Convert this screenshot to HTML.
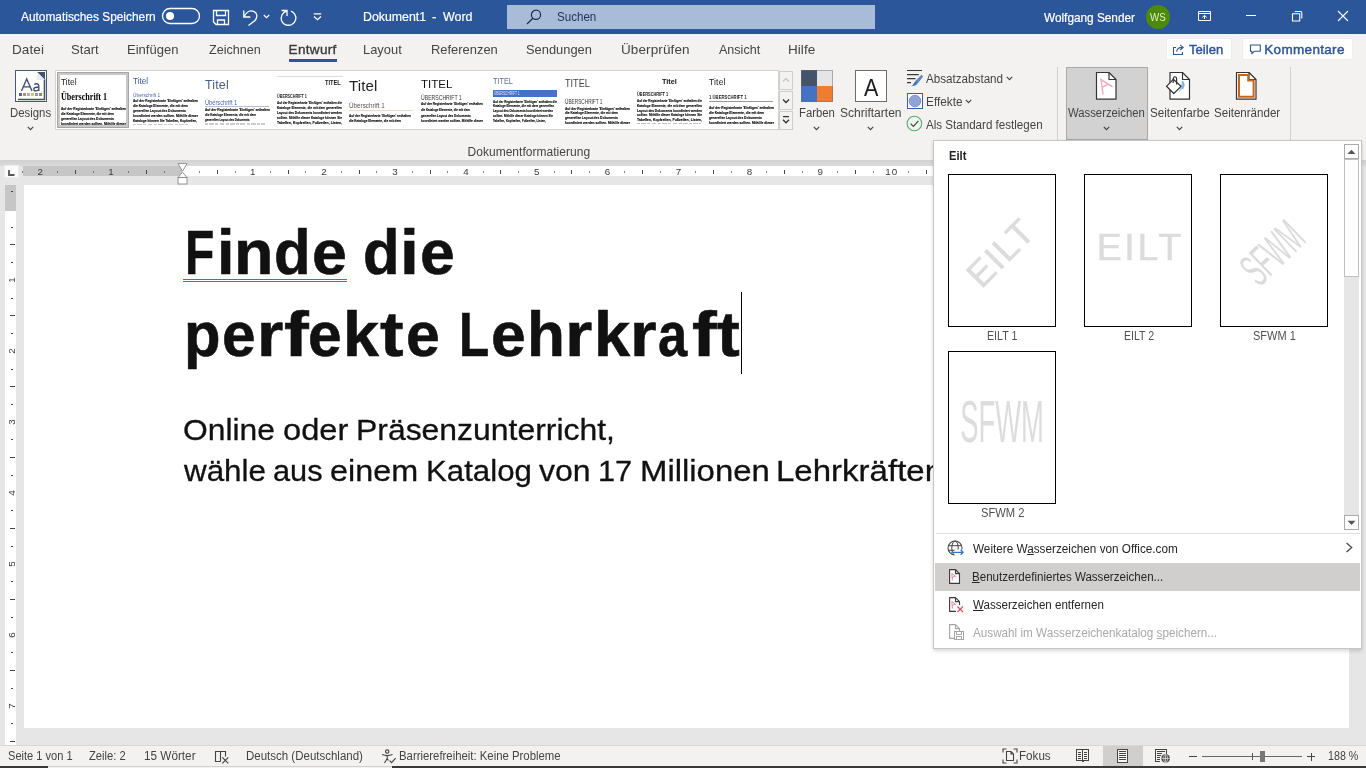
<!DOCTYPE html>
<html lang="de"><head><meta charset="utf-8"><title>Dokument1 - Word</title>
<style>
html,body{margin:0;padding:0;}
body{width:1366px;height:768px;overflow:hidden;background:#e6e6e6;position:relative;font-family:"Liberation Sans",sans-serif;}
#root{position:absolute;left:0;top:0;width:1366px;height:768px;overflow:hidden;will-change:transform;}
.b{position:absolute;box-sizing:border-box;display:block;}
.t{position:absolute;white-space:nowrap;line-height:1;transform-origin:0 0;font-family:"Liberation Sans",sans-serif;}
u{text-decoration:underline;text-underline-offset:1px;}
</style></head><body><div id="root">
<div class="b" style="left:0px;top:0px;width:1366px;height:34px;background:#2b579a;"></div>
<div class="b" style="left:0px;top:34px;width:1366px;height:126px;background:#f3f2f1;"></div>
<div class="b" style="left:0px;top:160px;width:1366px;height:6px;background:linear-gradient(#d0d0d0,#dbdbdb);"></div>
<div class="b" style="left:24px;top:185px;width:1325px;height:543px;background:#ffffff;"></div>
<span class="t" style="left:21.00px;top:10.00px;font-size:13px;color:#ffffff;transform:scaleX(0.9139);-webkit-text-stroke:0.2px #fff;">Automatisches Speichern</span>
<svg class="b" style="left:161px;top:7px;" width="40" height="18" viewBox="0 0 40 18"><rect x="1.5" y="1.5" width="37" height="15" rx="7.5" fill="none" stroke="#fff" stroke-width="1.3"/><circle cx="9" cy="9" r="4" fill="#fff"/></svg>
<svg class="b" style="left:212px;top:9px;" width="18" height="17" viewBox="0 0 18 17"><path d="M1.5 1.5H16.5V15.5H4L1.5 13Z M4.5 1.5V6.5H13.5V1.5 M5.5 15.5V11H12.5V15.5" fill="none" stroke="#fff" stroke-width="1.3"/></svg>
<svg class="b" style="left:242px;top:9px;" width="17" height="18" viewBox="0 0 17 18"><path d="M1.8 1.5V8H8.3 M2 8C4 3 8 1.2 11.5 2.3C15.5 3.8 15.8 8.3 13 11.5L6.5 16.5" fill="none" stroke="#fff" stroke-width="1.3"/></svg>
<svg class="b" style="left:263px;top:14px;" width="7" height="5" viewBox="0 0 7 5"><path d="M0.8 1L3.5 3.6L6.2 1" fill="none" stroke="#fff" stroke-width="1.2"/></svg>
<svg class="b" style="left:279px;top:9px;" width="19" height="18" viewBox="0 0 19 18"><path d="M2.5 1.5H8V7 M7.8 1.8C3 3.5 1.5 8 2.5 11.5C4 15.8 9 17.3 12.8 15.5C17 13.3 18 8.3 15.5 4.8C14.5 3.4 13.3 2.6 12 2.1" fill="none" stroke="#fff" stroke-width="1.3"/></svg>
<svg class="b" style="left:313px;top:12px;" width="9" height="9" viewBox="0 0 9 9"><path d="M0.8 1.8H8.2 M1 4.5L4.5 7.6L8 4.5" fill="none" stroke="#fff" stroke-width="1.2"/></svg>
<span class="t" style="left:363.05px;top:10.00px;font-size:13px;color:#ffffff;transform:scaleX(0.9480);-webkit-text-stroke:0.2px #fff;">Dokument1</span>
<span class="t" style="left:431.88px;top:10.00px;font-size:13px;color:#ffffff;-webkit-text-stroke:0.2px #fff;">-</span>
<span class="t" style="left:443.30px;top:10.00px;font-size:13px;color:#ffffff;transform:scaleX(0.9567);-webkit-text-stroke:0.2px #fff;">Word</span>
<div class="b" style="left:507px;top:5px;width:368px;height:24px;background:#a8bbd9;"></div>
<svg class="b" style="left:526px;top:9px;" width="16" height="16" viewBox="0 0 16 16"><circle cx="10" cy="5.8" r="4.6" fill="none" stroke="#1e2f4d" stroke-width="1.2"/><path d="M6.8 9.2L1 15" stroke="#1e2f4d" stroke-width="1.3"/></svg>
<span class="t" style="left:557.44px;top:10.00px;font-size:13px;color:#1f3157;transform:scaleX(0.8915);">Suchen</span>
<span class="t" style="left:1044.00px;top:11.00px;font-size:13px;color:#ffffff;transform:scaleX(0.9080);-webkit-text-stroke:0.2px #fff;">Wolfgang Sender</span>
<div class="b" style="left:1146px;top:5px;width:24px;height:24px;border-radius:50%;background:#4c8a0b"></div>
<span class="t" style="left:1150.00px;top:12.00px;font-size:10.5px;color:#e2efc0;transform:scaleX(0.9282);">WS</span>
<svg class="b" style="left:1197px;top:10px;" width="15" height="12" viewBox="0 0 15 12"><path d="M1.5 1.5H13.5V10.5H1.5Z M1.5 3.5H13.5 M7.5 9V5.5 M5.3 7.4L7.5 5.4L9.7 7.4" fill="none" stroke="#fff" stroke-width="1"/></svg>
<div class="b" style="left:1246px;top:15px;width:10px;height:1px;background:#fff;"></div>
<svg class="b" style="left:1291px;top:10px;" width="12" height="12" viewBox="0 0 12 12"><path d="M1.5 3.8H8.7V11H1.5Z" fill="none" stroke="#fff" stroke-width="1.1" stroke-linejoin="round"/><path d="M3.8 1.5H9.5Q10.8 1.5 10.8 2.8V8.6" fill="none" stroke="#fff" stroke-width="1.1"/></svg>
<svg class="b" style="left:1337px;top:10px;" width="12" height="12" viewBox="0 0 12 12"><path d="M1 1L11 11M11 1L1 11" stroke="#fff" stroke-width="1.1"/></svg>
<span class="t" style="left:11.88px;top:43.00px;font-size:13.5px;color:#444444;letter-spacing:0.125px;">Datei</span>
<span class="t" style="left:71.39px;top:43.00px;font-size:13.5px;color:#444444;transform:scaleX(0.9730);">Start</span>
<span class="t" style="left:126.91px;top:43.00px;font-size:13.5px;color:#444444;transform:scaleX(0.9659);">Einfügen</span>
<span class="t" style="left:208.65px;top:43.00px;font-size:13.5px;color:#444444;transform:scaleX(0.9327);">Zeichnen</span>
<span class="t" style="left:363.43px;top:43.00px;font-size:13.5px;color:#444444;transform:scaleX(0.9554);">Layout</span>
<span class="t" style="left:430.92px;top:43.00px;font-size:13.5px;color:#444444;transform:scaleX(0.9565);">Referenzen</span>
<span class="t" style="left:526.40px;top:43.00px;font-size:13.5px;color:#444444;transform:scaleX(0.9541);">Sendungen</span>
<span class="t" style="left:621.00px;top:43.00px;font-size:13.5px;color:#444444;letter-spacing:0.119px;">Überprüfen</span>
<span class="t" style="left:719.00px;top:43.00px;font-size:13.5px;color:#444444;transform:scaleX(0.9292);">Ansicht</span>
<span class="t" style="left:787.88px;top:43.00px;font-size:13.5px;color:#444444;letter-spacing:0.088px;">Hilfe</span>
<span class="t" style="left:288.57px;top:43.00px;font-size:13.5px;color:#3b3b3b;letter-spacing:0.329px;-webkit-text-stroke:0.35px #3b3b3b;">Entwurf</span>
<div class="b" style="left:289px;top:59px;width:48px;height:3px;background:#2b579a;"></div>
<div class="b" style="left:1166px;top:38px;width:66px;height:22px;background:#ffffff;border-radius:2px;border:1px solid #f0eeec;"></div>
<div class="b" style="left:1242px;top:38px;width:111px;height:22px;background:#ffffff;border-radius:2px;border:1px solid #f0eeec;"></div>
<svg class="b" style="left:1172px;top:43px;" width="13" height="13" viewBox="0 0 13 13"><path d="M4 4.5H1.5V11.5H10.5V9 M4.6 8.6C5 5.8 7 4.4 10 4.4 M8.2 1.8L11.2 4.4L8.2 7" fill="none" stroke="#2f5597" stroke-width="1.1"/></svg>
<span class="t" style="left:1189.26px;top:43.00px;font-size:13.5px;color:#2f5597;transform:scaleX(0.9700);-webkit-text-stroke:0.45px #2f5597;">Teilen</span>
<svg class="b" style="left:1249px;top:43px;" width="13" height="12" viewBox="0 0 13 12"><path d="M1.5 2H11.3V8.3H5.3L2.9 10.6V8.3H1.5Z" fill="none" stroke="#2f5597" stroke-width="1.1" stroke-linejoin="round"/></svg>
<span class="t" style="left:1264.28px;top:43.00px;font-size:13.5px;color:#2f5597;letter-spacing:0.322px;-webkit-text-stroke:0.45px #2f5597;">Kommentare</span>
<svg class="b" style="left:15px;top:70px;" width="32" height="32" viewBox="0 0 32 32"><rect x="0.5" y="0.5" width="31" height="31" fill="#fff" stroke="#4a5a73"/>
<rect x="2" y="2" width="28" height="28" fill="#fdfdfd"/>
<path d="M29.5 9V29.5H3" fill="none" stroke="#44546a" stroke-width="1.6"/>
<path d="M22 2H30V10Z" fill="#44546a"/><path d="M22 2V10H30Z" fill="#e8ecf2"/>
<g fill="none" stroke="#3e4d70" stroke-width="1.35"><path d="M6.5 21L11.7 9L17 21 M8.3 16.8H15.2"/><path d="M19.3 14.6C20.5 13.3 23.8 13.2 23.8 16V21 M23.8 17C21 17 18.8 17.4 18.8 19.2C18.8 21.4 22.5 21.4 23.8 19.4"/></g>
<rect x="4" y="23" width="3" height="3" fill="#5a5fa8"/><rect x="8" y="23" width="3" height="3" fill="#a8985c"/><rect x="12" y="23" width="3" height="3" fill="#c2a2b3"/><rect x="16" y="23" width="3" height="3" fill="#c9d163"/><rect x="20" y="23" width="3" height="3" fill="#8d92cb"/><rect x="24" y="23" width="3" height="3" fill="#7b9b52"/></svg>
<span class="t" style="left:10.09px;top:107.00px;font-size:12.5px;color:#444444;transform:scaleX(0.9100);">Designs</span>
<svg class="b" style="left:27.2px;top:126.3px;" width="7" height="5" viewBox="0 0 7 5"><path d="M0.8 0.9L3.5 3.6L6.2 0.9" fill="none" stroke="#444" stroke-width="1.2"/></svg>
<div class="b" style="left:55px;top:70px;width:724px;height:60px;background:#ffffff;border:1px solid #d4d2d0;"></div>
<div class="b" style="left:57px;top:72px;width:72px;height:56px;background:#ffffff;border:3px solid #c8c8c8;outline:1px solid #a6a6a6;outline-offset:-1px;"></div>
<span class="t" style="left:60.88px;top:78.00px;font-size:8.5px;color:#1a1a1a;transform:scaleX(0.9917);">Titel</span>
<span class="t" style="left:60.81px;top:92.00px;font-size:10.5px;color:#000;transform:scaleX(0.7712);font-weight:bold;font-family:'Liberation Serif',serif;">Überschrift 1</span>
<span class="t" style="left:60.91px;top:107.00px;font-size:4.3px;color:#000;transform:scaleX(0.7585);font-weight:bold;-webkit-text-stroke:0.12px #000;">Auf der Registerkarte &#x27;Einfügen&#x27; enthalten</span>
<span class="t" style="left:60.91px;top:112.00px;font-size:4.3px;color:#000;transform:scaleX(0.7337);font-weight:bold;-webkit-text-stroke:0.12px #000;">die Kataloge Elemente, die mit dem</span>
<span class="t" style="left:60.91px;top:117.00px;font-size:4.3px;color:#000;transform:scaleX(0.7536);font-weight:bold;-webkit-text-stroke:0.12px #000;">generellen Layout des Dokuments</span>
<span class="t" style="left:60.81px;top:122.00px;font-size:4.3px;color:#000;transform:scaleX(0.7642);font-weight:bold;-webkit-text-stroke:0.12px #000;">koordiniert werden sollten. Mithilfe dieser</span>
<span class="t" style="left:132.88px;top:77.00px;font-size:8.5px;color:#3d5a94;transform:scaleX(0.9587);">Titel</span>
<span class="t" style="left:132.60px;top:92.00px;font-size:6px;color:#4a6aa8;transform:scaleX(0.8000);">Überschrift 1</span>
<span class="t" style="left:132.91px;top:99.00px;font-size:4.3px;color:#000;transform:scaleX(0.7585);font-weight:bold;-webkit-text-stroke:0.12px #000;">Auf der Registerkarte &#x27;Einfügen&#x27; enthalten</span>
<span class="t" style="left:132.90px;top:104.00px;font-size:4.3px;color:#000;transform:scaleX(0.7619);font-weight:bold;-webkit-text-stroke:0.12px #000;">die Kataloge Elemente, die mit dem</span>
<span class="t" style="left:132.91px;top:109.00px;font-size:4.3px;color:#000;transform:scaleX(0.7536);font-weight:bold;-webkit-text-stroke:0.12px #000;">generellen Layout des Dokuments</span>
<span class="t" style="left:132.81px;top:114.00px;font-size:4.3px;color:#000;transform:scaleX(0.7642);font-weight:bold;-webkit-text-stroke:0.12px #000;">koordiniert werden sollten. Mithilfe dieser</span>
<span class="t" style="left:132.81px;top:119.00px;font-size:4.3px;color:#000;transform:scaleX(0.7467);font-weight:bold;-webkit-text-stroke:0.12px #000;">Kataloge können Sie Tabellen, Kopfzeilen,</span>
<div class="b" style="left:133px;top:123.7px;width:55px;height:1.2px;opacity:0.5;background:repeating-linear-gradient(90deg,#999 0 3px,transparent 3px 4.3px,#999 4.3px 9px,transparent 9px 10.4px)"></div>
<span class="t" style="left:204.95px;top:79.00px;font-size:12.5px;color:#4a5f86;letter-spacing:0.169px;">Titel</span>
<span class="t" style="left:204.56px;top:100.00px;font-size:6.5px;color:#4a6aa8;transform:scaleX(0.8750);">Überschrift 1</span>
<div class="b" style="left:205px;top:106.3px;width:64px;height:0.6px;background:#b4c0d8;"></div>
<span class="t" style="left:204.91px;top:108.00px;font-size:4.3px;color:#000;transform:scaleX(0.7585);font-weight:bold;-webkit-text-stroke:0.12px #000;">Auf der Registerkarte &#x27;Einfügen&#x27; enthalten</span>
<span class="t" style="left:204.91px;top:113.00px;font-size:4.3px;color:#000;transform:scaleX(0.7055);font-weight:bold;-webkit-text-stroke:0.12px #000;">die Kataloge Elemente, die mit dem</span>
<span class="t" style="left:204.92px;top:118.00px;font-size:4.3px;color:#000;transform:scaleX(0.6377);font-weight:bold;-webkit-text-stroke:0.12px #000;">generellen Layout des Dokuments</span>
<div class="b" style="left:205px;top:123.4px;width:60px;height:1.2px;opacity:0.5;background:repeating-linear-gradient(90deg,#999 0 3px,transparent 3px 4.3px,#999 4.3px 9px,transparent 9px 10.4px)"></div>
<div class="b" style="left:277px;top:76.3px;width:66px;height:0.6px;background:#dcdcdc;"></div>
<span class="t" style="left:325.30px;top:79.00px;font-size:7.5px;color:#1a1a1a;transform:scaleX(0.7610);font-weight:bold;">TITEL</span>
<span class="t" style="left:276.77px;top:93.00px;font-size:6px;color:#1a1a1a;transform:scaleX(0.6227);font-weight:bold;">ÜBERSCHRIFT 1</span>
<span class="t" style="left:276.91px;top:101.00px;font-size:4.3px;color:#000;transform:scaleX(0.6975);font-weight:bold;-webkit-text-stroke:0.12px #000;">Auf der Registerkarte &#x27;Einfügen&#x27; enthalten die</span>
<span class="t" style="left:276.81px;top:106.00px;font-size:4.3px;color:#000;transform:scaleX(0.7442);font-weight:bold;-webkit-text-stroke:0.12px #000;">Kataloge Elemente, die mit dem generellen</span>
<span class="t" style="left:276.81px;top:111.00px;font-size:4.3px;color:#000;transform:scaleX(0.7464);font-weight:bold;-webkit-text-stroke:0.12px #000;">Layout des Dokuments koordiniert werden</span>
<span class="t" style="left:276.91px;top:116.00px;font-size:4.3px;color:#000;transform:scaleX(0.7325);font-weight:bold;-webkit-text-stroke:0.12px #000;">sollten. Mithilfe dieser Kataloge können Sie</span>
<span class="t" style="left:277.00px;top:121.00px;font-size:4.3px;color:#000;transform:scaleX(0.8153);font-weight:bold;-webkit-text-stroke:0.12px #000;">Tabellen, Kopfzeilen, Fußzeilen, Listen,</span>
<span class="t" style="left:348.93px;top:78.00px;font-size:15px;color:#222;letter-spacing:0.175px;">Titel</span>
<span class="t" style="left:348.55px;top:102.00px;font-size:7px;color:#555;transform:scaleX(0.9003);">Überschrift 1</span>
<div class="b" style="left:349px;top:110.3px;width:64px;height:0.6px;background:#f0dcc6;"></div>
<span class="t" style="left:348.91px;top:114.00px;font-size:4.3px;color:#000;transform:scaleX(0.7230);font-weight:bold;-webkit-text-stroke:0.12px #000;">Auf der Registerkarte &#x27;Einfügen&#x27; enthalten</span>
<span class="t" style="left:348.91px;top:119.00px;font-size:4.3px;color:#000;transform:scaleX(0.7196);font-weight:bold;-webkit-text-stroke:0.12px #000;">die Kataloge Elemente, die mit dem</span>
<span class="t" style="left:420.76px;top:79.00px;font-size:11.8px;color:#111;transform:scaleX(0.9785);">TITEL</span>
<span class="t" style="left:420.60px;top:95.00px;font-size:6.5px;color:#333;transform:scaleX(0.7901);">ÜBERSCHRIFT 1</span>
<span class="t" style="left:420.91px;top:102.00px;font-size:4.3px;color:#000;transform:scaleX(0.7230);font-weight:bold;-webkit-text-stroke:0.12px #000;">Auf der Registerkarte &#x27;Einfügen&#x27; enthalten</span>
<span class="t" style="left:420.92px;top:108.00px;font-size:4.3px;color:#000;transform:scaleX(0.6772);font-weight:bold;-webkit-text-stroke:0.12px #000;">die Kataloge Elemente, die mit dem</span>
<span class="t" style="left:420.91px;top:114.00px;font-size:4.3px;color:#000;transform:scaleX(0.7101);font-weight:bold;-webkit-text-stroke:0.12px #000;">generellen Layout des Dokuments</span>
<span class="t" style="left:420.82px;top:119.00px;font-size:4.3px;color:#000;transform:scaleX(0.7284);font-weight:bold;-webkit-text-stroke:0.12px #000;">koordiniert werden sollten. Mithilfe dieser</span>
<span class="t" style="left:492.89px;top:77.00px;font-size:8.5px;color:#5a6c9a;transform:scaleX(0.8571);">TITEL</span>
<div class="b" style="left:493px;top:90px;width:64px;height:6.7px;background:#4472c4;"></div>
<span class="t" style="left:493.73px;top:92.00px;font-size:4.5px;color:#dfe6f5;transform:scaleX(0.7143);">ÜBERSCHRIFT 1</span>
<span class="t" style="left:492.91px;top:100.00px;font-size:4.3px;color:#000;transform:scaleX(0.6866);font-weight:bold;-webkit-text-stroke:0.12px #000;">Auf der Registerkarte &#x27;Einfügen&#x27; enthalten die</span>
<span class="t" style="left:492.83px;top:104.00px;font-size:4.3px;color:#000;transform:scaleX(0.6977);font-weight:bold;-webkit-text-stroke:0.12px #000;">Kataloge Elemente, die mit dem generellen</span>
<span class="t" style="left:492.83px;top:109.00px;font-size:4.3px;color:#000;transform:scaleX(0.6880);font-weight:bold;-webkit-text-stroke:0.12px #000;">Layout des Dokuments koordiniert werden</span>
<span class="t" style="left:492.92px;top:114.00px;font-size:4.3px;color:#000;transform:scaleX(0.6753);font-weight:bold;-webkit-text-stroke:0.12px #000;">sollten. Mithilfe dieser Kataloge können Sie</span>
<span class="t" style="left:493.00px;top:119.00px;font-size:4.3px;color:#000;transform:scaleX(0.6624);font-weight:bold;-webkit-text-stroke:0.12px #000;">Tabellen, Kopfzeilen, Fußzeilen, Listen,</span>
<span class="t" style="left:564.98px;top:78.00px;font-size:10.5px;color:#444;transform:scaleX(0.8679);">TITEL</span>
<span class="t" style="left:564.66px;top:98.00px;font-size:7px;color:#333;transform:scaleX(0.6758);">ÜBERSCHRIFT 1</span>
<span class="t" style="left:564.91px;top:107.00px;font-size:4.3px;color:#000;transform:scaleX(0.7585);font-weight:bold;-webkit-text-stroke:0.12px #000;">Auf der Registerkarte &#x27;Einfügen&#x27; enthalten</span>
<span class="t" style="left:564.91px;top:111.00px;font-size:4.3px;color:#000;transform:scaleX(0.7337);font-weight:bold;-webkit-text-stroke:0.12px #000;">die Kataloge Elemente, die mit dem</span>
<span class="t" style="left:564.91px;top:116.00px;font-size:4.3px;color:#000;transform:scaleX(0.7536);font-weight:bold;-webkit-text-stroke:0.12px #000;">generellen Layout des Dokuments</span>
<span class="t" style="left:564.81px;top:121.00px;font-size:4.3px;color:#000;transform:scaleX(0.7642);font-weight:bold;-webkit-text-stroke:0.12px #000;">koordiniert werden sollten. Mithilfe dieser</span>
<span class="t" style="left:662.09px;top:78.00px;font-size:8px;color:#111;transform:scaleX(0.9088);font-weight:bold;">Titel</span>
<span class="t" style="left:636.75px;top:92.00px;font-size:5.8px;color:#111;transform:scaleX(0.6722);font-weight:bold;">ÜBERSCHRIFT 1</span>
<span class="t" style="left:636.91px;top:99.00px;font-size:4.3px;color:#000;transform:scaleX(0.6975);font-weight:bold;-webkit-text-stroke:0.12px #000;">Auf der Registerkarte &#x27;Einfügen&#x27; enthalten die</span>
<span class="t" style="left:636.81px;top:104.00px;font-size:4.3px;color:#000;transform:scaleX(0.7442);font-weight:bold;-webkit-text-stroke:0.12px #000;">Kataloge Elemente, die mit dem generellen</span>
<span class="t" style="left:636.81px;top:109.00px;font-size:4.3px;color:#000;transform:scaleX(0.7464);font-weight:bold;-webkit-text-stroke:0.12px #000;">Layout des Dokuments koordiniert werden</span>
<span class="t" style="left:636.91px;top:113.00px;font-size:4.3px;color:#000;transform:scaleX(0.7325);font-weight:bold;-webkit-text-stroke:0.12px #000;">sollten. Mithilfe dieser Kataloge können Sie</span>
<span class="t" style="left:637.00px;top:118.00px;font-size:4.3px;color:#000;transform:scaleX(0.8153);font-weight:bold;-webkit-text-stroke:0.12px #000;">Tabellen, Kopfzeilen, Fußzeilen, Listen,</span>
<div class="b" style="left:637px;top:123.2px;width:64px;height:1.2px;opacity:0.5;background:repeating-linear-gradient(90deg,#888 0 3px,transparent 3px 4.3px,#888 4.3px 9px,transparent 9px 10.4px)"></div>
<span class="t" style="left:708.88px;top:78.00px;font-size:8.5px;color:#222;letter-spacing:0.219px;">Titel</span>
<span class="t" style="left:708.73px;top:94.00px;font-size:6px;color:#222;transform:scaleX(0.7085);font-weight:bold;">1   ÜBERSCHRIFT 1</span>
<div class="b" style="left:709px;top:101.2px;width:64px;height:0.7px;background:#999;"></div>
<span class="t" style="left:708.91px;top:106.00px;font-size:4.3px;color:#000;transform:scaleX(0.7585);font-weight:bold;-webkit-text-stroke:0.12px #000;">Auf der Registerkarte &#x27;Einfügen&#x27; enthalten</span>
<span class="t" style="left:708.90px;top:111.00px;font-size:4.3px;color:#000;transform:scaleX(0.7619);font-weight:bold;-webkit-text-stroke:0.12px #000;">die Kataloge Elemente, die mit dem</span>
<span class="t" style="left:708.91px;top:116.00px;font-size:4.3px;color:#000;transform:scaleX(0.7536);font-weight:bold;-webkit-text-stroke:0.12px #000;">generellen Layout des Dokuments</span>
<span class="t" style="left:708.81px;top:121.00px;font-size:4.3px;color:#000;transform:scaleX(0.7642);font-weight:bold;-webkit-text-stroke:0.12px #000;">koordiniert werden sollten. Mithilfe dieser</span>
<div class="b" style="left:779px;top:71px;width:14px;height:19px;background:#f3f2f1;border:1px solid #cfcdcb;"></div>
<div class="b" style="left:779px;top:91px;width:14px;height:18.5px;background:#f3f2f1;border:1px solid #cfcdcb;"></div>
<div class="b" style="left:779px;top:110.5px;width:14px;height:19px;background:#f3f2f1;border:1px solid #cfcdcb;"></div>
<svg class="b" style="left:782px;top:77px;" width="8" height="6" viewBox="0 0 8 6"><path d="M1 4.5L4 1.5L7 4.5" fill="none" stroke="#c4c2c0" stroke-width="1.2"/></svg>
<svg class="b" style="left:782px;top:98px;" width="8" height="6" viewBox="0 0 8 6"><path d="M1 1.5L4 4.5L7 1.5" fill="none" stroke="#333" stroke-width="1.3"/></svg>
<svg class="b" style="left:782px;top:115px;" width="8" height="10" viewBox="0 0 8 10"><path d="M1 1.6H7 M1 4.8L4 7.8L7 4.8" fill="none" stroke="#333" stroke-width="1.3"/></svg>
<span class="t" style="left:467.50px;top:146.00px;font-size:12px;color:#444444;letter-spacing:0.029px;">Dokumentformatierung</span>
<svg class="b" style="left:801px;top:70px;" width="32" height="32" viewBox="0 0 32 32"><rect x="0" y="0" width="16" height="16" fill="#44546a"/><rect x="16" y="0" width="16" height="16" fill="#e4e5e6"/><rect x="0" y="16" width="16" height="16" fill="#4472c4"/><rect x="16" y="16" width="16" height="16" fill="#ed7d31"/><rect x="0.5" y="0.5" width="31" height="31" fill="none" stroke="#6a6f78" stroke-opacity="0.5"/></svg>
<span class="t" style="left:798.89px;top:107.00px;font-size:12.5px;color:#444444;transform:scaleX(0.9060);">Farben</span>
<svg class="b" style="left:813.1px;top:126.3px;" width="7" height="5" viewBox="0 0 7 5"><path d="M0.8 0.9L3.5 3.6L6.2 0.9" fill="none" stroke="#444" stroke-width="1.2"/></svg>
<div class="b" style="left:855px;top:70px;width:32px;height:32px;background:#ffffff;border:1px solid #6e6e6e;"></div>
<span class="t" style="left:863.60px;top:76.00px;font-size:24.5px;color:#1a1a1a;transform:scaleX(0.8800);">A</span>
<span class="t" style="left:839.60px;top:107.00px;font-size:12.5px;color:#444444;transform:scaleX(0.9632);">Schriftarten</span>
<svg class="b" style="left:866.9px;top:126.3px;" width="7" height="5" viewBox="0 0 7 5"><path d="M0.8 0.9L3.5 3.6L6.2 0.9" fill="none" stroke="#444" stroke-width="1.2"/></svg>
<svg class="b" style="left:906px;top:69px;" width="17" height="18" viewBox="0 0 17 18"><path d="M1 1.5H16 M1 5.6H12.8 M1 9.6H9.5 M1 13.6H5" stroke="#3a3a3a" stroke-width="1.1"/><path d="M15.4 6.2L16.8 7.4L11.8 13.8L9.6 12.2Z" fill="#5b8fd0" stroke="#3d5f9a" stroke-width="0.6"/><path d="M9.6 12.2L11.8 13.8C11 16 8.6 17.4 5.6 17C7.6 16 7.6 13.6 9.6 12.2Z" fill="#3f74c4"/></svg>
<span class="t" style="left:926.30px;top:73.00px;font-size:12.5px;color:#444444;transform:scaleX(0.9319);">Absatzabstand</span>
<svg class="b" style="left:1006.0px;top:76.3px;" width="7" height="5" viewBox="0 0 7 5"><path d="M0.8 0.9L3.5 3.6L6.2 0.9" fill="none" stroke="#444" stroke-width="1.2"/></svg>
<svg class="b" style="left:907px;top:93px;" width="16" height="16" viewBox="0 0 16 16"><rect x="0.5" y="0.5" width="15" height="15" fill="#fff" stroke="#3b5ea5"/><circle cx="8" cy="8" r="5.8" fill="#8fa3d6" stroke="#6f86c4" stroke-width="0.8"/></svg>
<span class="t" style="left:926.25px;top:96.00px;font-size:12.5px;color:#444444;transform:scaleX(0.9455);">Effekte</span>
<svg class="b" style="left:965.3px;top:99.3px;" width="7" height="5" viewBox="0 0 7 5"><path d="M0.8 0.9L3.5 3.6L6.2 0.9" fill="none" stroke="#444" stroke-width="1.2"/></svg>
<svg class="b" style="left:906px;top:115px;" width="17" height="17" viewBox="0 0 17 17"><circle cx="8.4" cy="8.5" r="7.3" fill="#eaf6ee" stroke="#5fa878" stroke-width="1.1"/><path d="M4.6 8.6L7.4 11.4L12.4 5.8" fill="none" stroke="#444" stroke-width="1.2"/></svg>
<span class="t" style="left:926.30px;top:119.00px;font-size:12.5px;color:#444444;transform:scaleX(0.9272);">Als Standard festlegen</span>
<div class="b" style="left:1057px;top:67px;width:1px;height:73px;background:#d2d0ce;"></div>
<div class="b" style="left:1290px;top:67px;width:1px;height:73px;background:#d2d0ce;"></div>
<div class="b" style="left:1066px;top:67px;width:82px;height:73px;background:#d2d2d2;border:1px solid #a8a8a8;"></div>
<svg class="b" style="left:1095px;top:71px;" width="23" height="30" viewBox="0 0 23 30"><path d="M1.5 1.5H14L21 8.5V28.2H1.5Z" fill="#fff" stroke="#333" stroke-width="1.2" stroke-linejoin="round"/><path d="M14 1.5V8.5H21" fill="none" stroke="#333" stroke-width="1.2" stroke-linejoin="round"/><g fill="none" stroke="#eeb0be" stroke-width="1.5" stroke-linecap="round"><path d="M8 23L6 8.5L17 15.5 M7 16.2L13.2 13.2"/></g></svg>
<span class="t" style="left:1068.40px;top:107.00px;font-size:12.5px;color:#444444;transform:scaleX(0.9046);">Wasserzeichen</span>
<svg class="b" style="left:1103.0px;top:126.3px;" width="7" height="5" viewBox="0 0 7 5"><path d="M0.8 0.9L3.5 3.6L6.2 0.9" fill="none" stroke="#444" stroke-width="1.2"/></svg>
<svg class="b" style="left:1165px;top:71px;" width="27" height="30" viewBox="0 0 27 30"><g transform="translate(3.5 0)"><path d="M1.5 1.5H14L21 8.5V28.2H1.5Z" fill="#fff" stroke="#333" stroke-width="1.2" stroke-linejoin="round"/><path d="M14 1.5V8.5H21" fill="none" stroke="#333" stroke-width="1.2" stroke-linejoin="round"/></g><path d="M13.5 22L17.2 10.5L20 14.5Z" fill="#9cc3e6" opacity="0.9"/><path d="M17 10.5C18.8 11.5 19.2 14 17.5 18" fill="none" stroke="#7fb0dd" stroke-width="1.6"/><path d="M8.3 8.3L1.5 15.3L8.8 22.5L16 15.3Z" fill="#fff" stroke="#333" stroke-width="1.2" stroke-linejoin="round"/><path d="M8.2 12V8C8.2 5 11.6 5 11.6 8V13.5" fill="none" stroke="#333" stroke-width="1.2"/></svg>
<span class="t" style="left:1149.82px;top:107.00px;font-size:12.5px;color:#444444;transform:scaleX(0.9339);">Seitenfarbe</span>
<svg class="b" style="left:1175.9px;top:126.3px;" width="7" height="5" viewBox="0 0 7 5"><path d="M0.8 0.9L3.5 3.6L6.2 0.9" fill="none" stroke="#444" stroke-width="1.2"/></svg>
<svg class="b" style="left:1235px;top:71px;" width="23" height="30" viewBox="0 0 23 30"><path d="M1.5 1.5H14L21 8.5V28.2H1.5Z" fill="#fff" stroke="#333" stroke-width="1.2" stroke-linejoin="round"/><path d="M14 1.5V8.5H21" fill="none" stroke="#333" stroke-width="1.2" stroke-linejoin="round"/><path d="M4 4H13.2V9.5H18.6V25.8H4Z" fill="none" stroke="#c8651b" stroke-width="2"/></svg>
<span class="t" style="left:1213.82px;top:107.00px;font-size:12.5px;color:#444444;transform:scaleX(0.9244);">Seitenränder</span>
<div class="b" style="left:4px;top:165px;width:15px;height:13px;background:#fbfbfb;border:1px solid #ededed;"></div>
<svg class="b" style="left:8px;top:170px;" width="7" height="6" viewBox="0 0 7 6"><path d="M1 0V5H6.5" fill="none" stroke="#555" stroke-width="1.8"/></svg>
<div class="b" style="left:23px;top:166px;width:159px;height:10px;background:#c6c6c6;"></div>
<div class="b" style="left:182px;top:166px;width:751px;height:10px;background:#ffffff;"></div>
<svg class="b" style="left:0;top:0" width="940" height="180" fill="#4a4a4a" shape-rendering="crispEdges"><rect x="22" y="171.4" width="1" height="1.3" shape-rendering="auto"/><rect x="57" y="171.4" width="1" height="1.3" shape-rendering="auto"/><rect x="75" y="170" width="1" height="4.4"/><rect x="93" y="171.4" width="1" height="1.3" shape-rendering="auto"/><rect x="128" y="171.4" width="1" height="1.3" shape-rendering="auto"/><rect x="146" y="170" width="1" height="4.4"/><rect x="164" y="171.4" width="1" height="1.3" shape-rendering="auto"/><rect x="199" y="171.4" width="1" height="1.3" shape-rendering="auto"/><rect x="217" y="170" width="1" height="4.4"/><rect x="235" y="171.4" width="1" height="1.3" shape-rendering="auto"/><rect x="270" y="171.4" width="1" height="1.3" shape-rendering="auto"/><rect x="288" y="170" width="1" height="4.4"/><rect x="305" y="171.4" width="1" height="1.3" shape-rendering="auto"/><rect x="341" y="171.4" width="1" height="1.3" shape-rendering="auto"/><rect x="359" y="170" width="1" height="4.4"/><rect x="376" y="171.4" width="1" height="1.3" shape-rendering="auto"/><rect x="412" y="171.4" width="1" height="1.3" shape-rendering="auto"/><rect x="430" y="170" width="1" height="4.4"/><rect x="447" y="171.4" width="1" height="1.3" shape-rendering="auto"/><rect x="483" y="171.4" width="1" height="1.3" shape-rendering="auto"/><rect x="500" y="170" width="1" height="4.4"/><rect x="518" y="171.4" width="1" height="1.3" shape-rendering="auto"/><rect x="554" y="171.4" width="1" height="1.3" shape-rendering="auto"/><rect x="571" y="170" width="1" height="4.4"/><rect x="589" y="171.4" width="1" height="1.3" shape-rendering="auto"/><rect x="624" y="171.4" width="1" height="1.3" shape-rendering="auto"/><rect x="642" y="170" width="1" height="4.4"/><rect x="660" y="171.4" width="1" height="1.3" shape-rendering="auto"/><rect x="695" y="171.4" width="1" height="1.3" shape-rendering="auto"/><rect x="713" y="170" width="1" height="4.4"/><rect x="731" y="171.4" width="1" height="1.3" shape-rendering="auto"/><rect x="766" y="171.4" width="1" height="1.3" shape-rendering="auto"/><rect x="784" y="170" width="1" height="4.4"/><rect x="802" y="171.4" width="1" height="1.3" shape-rendering="auto"/><rect x="837" y="171.4" width="1" height="1.3" shape-rendering="auto"/><rect x="855" y="170" width="1" height="4.4"/><rect x="873" y="171.4" width="1" height="1.3" shape-rendering="auto"/><rect x="908" y="171.4" width="1" height="1.3" shape-rendering="auto"/><rect x="926" y="170" width="1" height="4.4"/></svg>
<span class="t" style="left:37.62px;top:167.00px;font-size:9.8px;color:#3a3a3a;">2</span>
<span class="t" style="left:108.26px;top:167.00px;font-size:9.8px;color:#3a3a3a;">1</span>
<span class="t" style="left:250.04px;top:167.00px;font-size:9.8px;color:#3a3a3a;">1</span>
<span class="t" style="left:321.18px;top:167.00px;font-size:9.8px;color:#3a3a3a;">2</span>
<span class="t" style="left:392.20px;top:167.00px;font-size:9.8px;color:#3a3a3a;">3</span>
<span class="t" style="left:463.21px;top:167.00px;font-size:9.8px;color:#3a3a3a;">4</span>
<span class="t" style="left:533.98px;top:167.00px;font-size:9.8px;color:#3a3a3a;">5</span>
<span class="t" style="left:604.74px;top:167.00px;font-size:9.8px;color:#3a3a3a;">6</span>
<span class="t" style="left:675.63px;top:167.00px;font-size:9.8px;color:#3a3a3a;">7</span>
<span class="t" style="left:746.64px;top:167.00px;font-size:9.8px;color:#3a3a3a;">8</span>
<span class="t" style="left:817.41px;top:167.00px;font-size:9.8px;color:#3a3a3a;">9</span>
<span class="t" style="left:885.25px;top:167.00px;font-size:9.8px;color:#3a3a3a;letter-spacing:0.975px;">10</span>
<svg class="b" style="left:177px;top:163px;" width="11" height="22" viewBox="0 0 11 22"><path d="M1 0.6H10L5.5 8.3Z" fill="#fff" stroke="#8a8a8a" stroke-width="0.9"/><path d="M5.5 9.2L10 14.5H1Z" fill="#fff" stroke="#8a8a8a" stroke-width="0.9"/><rect x="1" y="14.5" width="9" height="6.5" fill="#fff" stroke="#8a8a8a" stroke-width="0.9"/></svg>
<div class="b" style="left:5px;top:185px;width:11px;height:26px;background:#c6c6c6;"></div>
<div class="b" style="left:5px;top:211px;width:11px;height:534px;background:#ffffff;"></div>
<svg class="b" style="left:0;top:0" width="20" height="746" fill="#444" shape-rendering="crispEdges"><rect x="11" y="191" width="2" height="1"/><rect x="11" y="227" width="2" height="1"/><rect x="10" y="244" width="5" height="1"/><rect x="11" y="262" width="2" height="1"/><rect x="11" y="298" width="2" height="1"/><rect x="10" y="315" width="5" height="1"/><rect x="11" y="333" width="2" height="1"/><rect x="11" y="369" width="2" height="1"/><rect x="10" y="386" width="5" height="1"/><rect x="11" y="404" width="2" height="1"/><rect x="11" y="439" width="2" height="1"/><rect x="10" y="457" width="5" height="1"/><rect x="11" y="475" width="2" height="1"/><rect x="11" y="510" width="2" height="1"/><rect x="10" y="528" width="5" height="1"/><rect x="11" y="546" width="2" height="1"/><rect x="11" y="581" width="2" height="1"/><rect x="10" y="599" width="5" height="1"/><rect x="11" y="617" width="2" height="1"/><rect x="11" y="652" width="2" height="1"/><rect x="10" y="670" width="5" height="1"/><rect x="11" y="688" width="2" height="1"/><rect x="11" y="723" width="2" height="1"/><rect x="10" y="741" width="5" height="1"/></svg>
<span class="t" style="left:7px;top:275.3px;width:10px;height:10px;line-height:10px;font-size:9.8px;color:#3a3a3a;text-align:center;transform-origin:center;transform:rotate(-90deg);">1</span>
<span class="t" style="left:7px;top:346.3px;width:10px;height:10px;line-height:10px;font-size:9.8px;color:#3a3a3a;text-align:center;transform-origin:center;transform:rotate(-90deg);">2</span>
<span class="t" style="left:7px;top:417.2px;width:10px;height:10px;line-height:10px;font-size:9.8px;color:#3a3a3a;text-align:center;transform-origin:center;transform:rotate(-90deg);">3</span>
<span class="t" style="left:7px;top:488.2px;width:10px;height:10px;line-height:10px;font-size:9.8px;color:#3a3a3a;text-align:center;transform-origin:center;transform:rotate(-90deg);">4</span>
<span class="t" style="left:7px;top:559.2px;width:10px;height:10px;line-height:10px;font-size:9.8px;color:#3a3a3a;text-align:center;transform-origin:center;transform:rotate(-90deg);">5</span>
<span class="t" style="left:7px;top:630.2px;width:10px;height:10px;line-height:10px;font-size:9.8px;color:#3a3a3a;text-align:center;transform-origin:center;transform:rotate(-90deg);">6</span>
<span class="t" style="left:7px;top:701.2px;width:10px;height:10px;line-height:10px;font-size:9.8px;color:#3a3a3a;text-align:center;transform-origin:center;transform:rotate(-90deg);">7</span>
<span class="t" style="left:184.86px;top:221.00px;font-size:63px;color:#111111;transform:scaleX(0.7625);font-weight:bold;-webkit-text-stroke:0.6px #111;">F</span>
<span class="t" style="left:216.54px;top:221.00px;font-size:63px;color:#111111;transform:scaleX(0.9971);font-weight:bold;-webkit-text-stroke:0.6px #111;">i</span>
<span class="t" style="left:234.08px;top:221.00px;font-size:63px;color:#111111;transform:scaleX(1.0230);font-weight:bold;-webkit-text-stroke:0.6px #111;">n</span>
<span class="t" style="left:274.10px;top:221.00px;font-size:63px;color:#111111;transform:scaleX(0.9512);font-weight:bold;-webkit-text-stroke:0.6px #111;">d</span>
<span class="t" style="left:312.01px;top:221.00px;font-size:63px;color:#111111;transform:scaleX(0.9942);font-weight:bold;-webkit-text-stroke:0.6px #111;">e</span>
<span class="t" style="left:363.31px;top:221.00px;font-size:63px;color:#111111;transform:scaleX(0.9480);font-weight:bold;-webkit-text-stroke:0.6px #111;">d</span>
<span class="t" style="left:399.98px;top:221.00px;font-size:63px;color:#111111;transform:scaleX(1.0783);font-weight:bold;-webkit-text-stroke:0.6px #111;">i</span>
<span class="t" style="left:419.72px;top:221.00px;font-size:63px;color:#111111;transform:scaleX(0.9909);font-weight:bold;-webkit-text-stroke:0.6px #111;">e</span>
<div class="b" style="left:183px;top:279px;width:164px;height:1px;background:#3e78b2;"></div>
<div class="b" style="left:183px;top:281px;width:164px;height:1px;background:#3e78b2;"></div>
<span class="t" style="left:184.19px;top:303.00px;font-size:63px;color:#111111;transform:scaleX(0.9480);font-weight:bold;-webkit-text-stroke:0.6px #111;">p</span>
<span class="t" style="left:222.00px;top:303.00px;font-size:63px;color:#111111;transform:scaleX(0.9580);font-weight:bold;-webkit-text-stroke:0.6px #111;">e</span>
<span class="t" style="left:256.88px;top:303.00px;font-size:63px;color:#111111;transform:scaleX(1.0718);font-weight:bold;-webkit-text-stroke:0.6px #111;">r</span>
<span class="t" style="left:283.87px;top:303.00px;font-size:63px;color:#111111;transform:scaleX(1.1800);font-weight:bold;-webkit-text-stroke:0.6px #111;">f</span>
<span class="t" style="left:308.00px;top:303.00px;font-size:63px;color:#111111;transform:scaleX(0.9613);font-weight:bold;-webkit-text-stroke:0.6px #111;">e</span>
<span class="t" style="left:342.80px;top:303.00px;font-size:63px;color:#111111;transform:scaleX(1.0276);font-weight:bold;-webkit-text-stroke:0.6px #111;">k</span>
<span class="t" style="left:380.36px;top:303.00px;font-size:63px;color:#111111;transform:scaleX(1.1231);font-weight:bold;-webkit-text-stroke:0.6px #111;">t</span>
<span class="t" style="left:405.79px;top:303.00px;font-size:63px;color:#111111;transform:scaleX(0.9646);font-weight:bold;-webkit-text-stroke:0.6px #111;">e</span>
<span class="t" style="left:459.37px;top:303.00px;font-size:63px;color:#111111;transform:scaleX(0.7845);font-weight:bold;-webkit-text-stroke:0.6px #111;">L</span>
<span class="t" style="left:491.02px;top:303.00px;font-size:63px;color:#111111;transform:scaleX(0.9909);font-weight:bold;-webkit-text-stroke:0.6px #111;">e</span>
<span class="t" style="left:526.69px;top:303.00px;font-size:63px;color:#111111;transform:scaleX(0.9851);font-weight:bold;-webkit-text-stroke:0.6px #111;">h</span>
<span class="t" style="left:565.31px;top:303.00px;font-size:63px;color:#111111;transform:scaleX(1.1128);font-weight:bold;-webkit-text-stroke:0.6px #111;">r</span>
<span class="t" style="left:593.59px;top:303.00px;font-size:63px;color:#111111;transform:scaleX(1.0309);font-weight:bold;-webkit-text-stroke:0.6px #111;">k</span>
<span class="t" style="left:630.14px;top:303.00px;font-size:63px;color:#111111;transform:scaleX(1.0821);font-weight:bold;-webkit-text-stroke:0.6px #111;">r</span>
<span class="t" style="left:657.54px;top:303.00px;font-size:63px;color:#111111;transform:scaleX(0.8327);font-weight:bold;-webkit-text-stroke:0.6px #111;">a</span>
<span class="t" style="left:692.37px;top:303.00px;font-size:63px;color:#111111;transform:scaleX(1.1800);font-weight:bold;-webkit-text-stroke:0.6px #111;">f</span>
<span class="t" style="left:717.08px;top:303.00px;font-size:63px;color:#111111;transform:scaleX(1.0872);font-weight:bold;-webkit-text-stroke:0.6px #111;">t</span>
<div class="b" style="left:741px;top:292px;width:1px;height:82px;background:#000;"></div>
<span class="t" style="left:182.72px;top:415.00px;font-size:29.5px;color:#111111;transform:scaleX(1.0784);-webkit-text-stroke:0.3px #111;">Online</span>
<span class="t" style="left:282.62px;top:415.00px;font-size:29.5px;color:#111111;transform:scaleX(1.1068);-webkit-text-stroke:0.3px #111;">oder</span>
<span class="t" style="left:355.83px;top:415.00px;font-size:29.5px;color:#111111;transform:scaleX(1.0816);-webkit-text-stroke:0.3px #111;">Präsenzunterricht,</span>
<span class="t" style="left:184.00px;top:456.00px;font-size:29.5px;color:#111111;transform:scaleX(1.0640);-webkit-text-stroke:0.3px #111;">wähle</span>
<span class="t" style="left:273.20px;top:456.00px;font-size:29.5px;color:#111111;transform:scaleX(1.0424);-webkit-text-stroke:0.3px #111;">aus</span>
<span class="t" style="left:330.43px;top:456.00px;font-size:29.5px;color:#111111;transform:scaleX(1.0969);-webkit-text-stroke:0.3px #111;">einem</span>
<span class="t" style="left:425.99px;top:456.00px;font-size:29.5px;color:#111111;transform:scaleX(1.0580);-webkit-text-stroke:0.3px #111;">Katalog</span>
<span class="t" style="left:539.16px;top:456.00px;font-size:29.5px;color:#111111;transform:scaleX(1.0857);-webkit-text-stroke:0.3px #111;">von</span>
<span class="t" style="left:598.46px;top:456.00px;font-size:29.5px;color:#111111;transform:scaleX(1.0414);-webkit-text-stroke:0.3px #111;">17</span>
<span class="t" style="left:639.65px;top:456.00px;font-size:29.5px;color:#111111;transform:scaleX(1.1148);-webkit-text-stroke:0.3px #111;">Millionen</span>
<span class="t" style="left:776.04px;top:456.00px;font-size:29.5px;color:#111111;transform:scaleX(1.1193);-webkit-text-stroke:0.3px #111;">Lehrkräften</span>
<div class="b" style="left:0px;top:745px;width:1366px;height:23px;background:#f3f2f1;border-top:1px solid #d6d6d6;"></div>
<div class="b" style="left:1103px;top:746px;width:40px;height:20px;background:#d0cfce;"></div>
<span class="t" style="left:7.84px;top:750.00px;font-size:12px;color:#444444;transform:scaleX(0.9232);">Seite 1 von 1</span>
<span class="t" style="left:88.65px;top:750.00px;font-size:12px;color:#444444;transform:scaleX(0.9329);">Zeile: 2</span>
<span class="t" style="left:143.74px;top:750.00px;font-size:12px;color:#444444;transform:scaleX(0.9786);">15 Wörter</span>
<svg class="b" style="left:214px;top:750px;" width="16" height="14" viewBox="0 0 16 14"><path d="M6.5 1.5V11.5 M6.5 1.5H1.5V11.5H6.5 M6.5 1.5H11.5V6.5" fill="none" stroke="#444" stroke-width="1.1"/><path d="M8.3 7.3L14.3 13.3 M14.3 7.3L8.3 13.3" stroke="#444" stroke-width="1.2"/></svg>
<span class="t" style="left:245.64px;top:750.00px;font-size:12px;color:#444444;transform:scaleX(0.9580);">Deutsch (Deutschland)</span>
<svg class="b" style="left:381px;top:749px;" width="16" height="15" viewBox="0 0 16 15"><circle cx="6.2" cy="2.6" r="1.7" fill="none" stroke="#444" stroke-width="1.1"/><path d="M1 5.6C4 6.8 8.5 6.8 11.5 5.6 M6.2 6.5V9.5L3.5 14 M6.2 9.5L7.4 11.5" fill="none" stroke="#444" stroke-width="1.1"/><path d="M8.6 11.6L10.6 13.6L14.6 9.2" fill="none" stroke="#444" stroke-width="1.2"/></svg>
<span class="t" style="left:398.55px;top:750.00px;font-size:12px;color:#444444;transform:scaleX(0.9465);">Barrierefreiheit: Keine Probleme</span>
<svg class="b" style="left:1002px;top:748px;" width="16" height="16" viewBox="0 0 16 16"><path d="M1 4.5V1H4.5 M11.5 1H15V4.5 M15 11.5V15H11.5 M4.5 15H1V11.5" fill="none" stroke="#444" stroke-width="1.1"/><path d="M4.5 3.5H9L11.5 6V12.5H4.5Z M9 3.5V6H11.5" fill="none" stroke="#444" stroke-width="1.1"/></svg>
<span class="t" style="left:1019.33px;top:750.00px;font-size:12px;color:#444444;transform:scaleX(0.9696);">Fokus</span>
<svg class="b" style="left:1076px;top:749px;shape-rendering:crispEdges;" width="14" height="13" viewBox="0 0 14 13"><path d="M6.5 1.5V11.5H0.5V0.5H5Q6.5 0.5 6.5 1.5Q6.5 0.5 8 0.5H12.5V11.5H6.5" fill="none" stroke="#444" stroke-width="1"/><path d="M2 3.5H5M2 5.5H5M2 7.5H5M2 9.5H5M8 3.5H11M8 5.5H11M8 7.5H11M8 9.5H11" stroke="#444" stroke-width="1"/><path d="M5.5 12.5H7.5" stroke="#444" stroke-width="1"/></svg>
<svg class="b" style="left:1117px;top:749px;shape-rendering:crispEdges;" width="11" height="14" viewBox="0 0 11 14"><rect x="0.5" y="0.5" width="10" height="13" fill="#f6f6f6" stroke="#444"/><path d="M2 2.5H9M2 4.5H9M2 6.5H9M2 8.5H9M2 10.5H9" stroke="#444" stroke-width="1"/></svg>
<svg class="b" style="left:1155px;top:749px;" width="16" height="14" viewBox="0 0 16 14"><g shape-rendering="crispEdges"><path d="M11.5 5V0.5H0.5V12.5H5" fill="none" stroke="#444"/><path d="M2 2.5H10M2 4.5H7M2 6.5H6M2 8.5H5M2 10.5H5" stroke="#444" stroke-width="1"/></g><circle cx="10.6" cy="9.4" r="4.3" fill="#4a4a4a"/><path d="M6.5 9.4H14.8 M10.6 5.2V13.6" stroke="#f3f2f1" stroke-width="0.7"/><ellipse cx="10.6" cy="9.4" rx="2" ry="4.2" fill="none" stroke="#f3f2f1" stroke-width="0.6"/></svg>
<div class="b" style="left:1189px;top:756px;width:8px;height:1px;background:#444;"></div>
<div class="b" style="left:1202px;top:756px;width:100px;height:1px;background:#666;"></div>
<div class="b" style="left:1252px;top:753px;width:1px;height:7px;background:#555;"></div>
<div class="b" style="left:1260px;top:751px;width:5px;height:11px;background:#777;"></div>
<div class="b" style="left:1307px;top:756px;width:8px;height:1px;background:#444;"></div>
<div class="b" style="left:1310.5px;top:752.5px;width:1px;height:8px;background:#444;"></div>
<span class="t" style="left:1328.02px;top:750.00px;font-size:12px;color:#444444;transform:scaleX(0.8916);">188 %</span>
<div class="b" style="left:48px;top:766px;width:344px;height:1px;background:#cfcfcf;"></div>
<div class="b" style="left:0px;top:766px;width:48px;height:2px;background:#3a3a3a;"></div>
<div class="b" style="left:392px;top:766px;width:974px;height:2px;background:#3a3a3a;"></div>
<div class="b" style="left:933px;top:140px;width:429px;height:509px;background:#ffffff;border:1px solid #c6c6c6;box-shadow:0 2px 4px rgba(0,0,0,0.16);"></div>
<span class="t" style="left:949.22px;top:150.00px;font-size:12.5px;color:#222;transform:scaleX(0.8925);font-weight:bold;">Eilt</span>
<div class="b" style="left:948px;top:174px;width:108.3px;height:152.8px;background:#fff;border:1px solid #000;border-right-width:1.3px;border-bottom-width:1.3px;"></div>
<div class="b" style="left:1084px;top:174px;width:108.3px;height:152.8px;background:#fff;border:1px solid #000;border-right-width:1.3px;border-bottom-width:1.3px;"></div>
<div class="b" style="left:1220px;top:174px;width:108.3px;height:152.8px;background:#fff;border:1px solid #000;border-right-width:1.3px;border-bottom-width:1.3px;"></div>
<div class="b" style="left:948px;top:351px;width:108.3px;height:152.8px;background:#fff;border:1px solid #000;border-right-width:1.3px;border-bottom-width:1.3px;"></div>
<span class="t" style="left:960.5px;top:234.5px;width:80px;text-align:center;font-size:36px;letter-spacing:1.5px;color:#dcdcdc;-webkit-text-stroke:0.5px #dcdcdc;transform-origin:center;transform:rotate(-45deg);">EILT</span>
<span class="t" style="left:1096.67px;top:229.00px;font-size:37.5px;color:#dcdcdc;letter-spacing:2.675px;-webkit-text-stroke:0.5px #dcdcdc;">EILT</span>
<span class="t" style="left:1192.4px;top:228.5px;width:160px;text-align:center;font-size:47px;color:#dbdbdb;transform-origin:center;transform:rotate(-44deg) scaleX(0.47);">SFWM</span>
<span class="t" style="left:912px;top:393px;width:180px;text-align:center;font-size:59px;color:#dddddd;transform-origin:center;transform:scaleX(0.465);">SFWM</span>
<span class="t" style="left:987.11px;top:330.00px;font-size:12px;color:#505050;transform:scaleX(0.8855);">EILT 1</span>
<span class="t" style="left:1123.52px;top:330.00px;font-size:12px;color:#505050;transform:scaleX(0.8794);">EILT 2</span>
<span class="t" style="left:1252.74px;top:330.00px;font-size:12px;color:#505050;transform:scaleX(0.9162);">SFWM 1</span>
<span class="t" style="left:980.74px;top:507.00px;font-size:12px;color:#505050;transform:scaleX(0.9293);">SFWM 2</span>
<div class="b" style="left:1344px;top:144px;width:15px;height:386px;background:#e6e6e6;"></div>
<div class="b" style="left:1344px;top:144px;width:15px;height:15px;background:#fff;border:1px solid #ababab;"></div>
<svg class="b" style="left:1347px;top:149px;" width="9" height="6" viewBox="0 0 9 6"><path d="M0.5 5L4.5 0.8L8.5 5Z" fill="#555"/></svg>
<div class="b" style="left:1344px;top:159px;width:15px;height:118px;background:#fff;border:1px solid #c0c0c0;"></div>
<div class="b" style="left:1344px;top:515px;width:15px;height:15px;background:#fff;border:1px solid #ababab;"></div>
<svg class="b" style="left:1347px;top:520px;" width="9" height="6" viewBox="0 0 9 6"><path d="M0.5 0.8L4.5 5L8.5 0.8Z" fill="#555"/></svg>
<div class="b" style="left:936px;top:533px;width:424px;height:1px;background:#e1e1e1;"></div>
<div class="b" style="left:935px;top:563px;width:425px;height:28px;background:#d0cfce;"></div>
<span class="t" style="left:972.50px;top:543.00px;font-size:12px;color:#262626;transform:scaleX(0.9789);">Weitere W<u>a</u>sserzeichen von Office.com</span>
<span class="t" style="left:971.54px;top:571.00px;font-size:12px;color:#262626;transform:scaleX(0.9641);"><u>B</u>enutzerdefiniertes Wasserzeichen...</span>
<span class="t" style="left:972.50px;top:599.00px;font-size:12px;color:#262626;transform:scaleX(0.9653);"><u>W</u>asserzeichen entfernen</span>
<span class="t" style="left:972.50px;top:627.00px;font-size:12px;color:#a8a8a8;transform:scaleX(0.9749);">Auswahl im Wasserzeichenkatalog <u>s</u>peichern...</span>
<svg class="b" style="left:1345px;top:542px;" width="9" height="11" viewBox="0 0 9 11"><path d="M1.5 1L6.8 5.5L1.5 10" fill="none" stroke="#444" stroke-width="1.2"/></svg>
<svg class="b" style="left:947px;top:540px;" width="18" height="17" viewBox="0 0 18 17"><circle cx="8" cy="8" r="7" fill="none" stroke="#444" stroke-width="1.1"/><ellipse cx="8" cy="8" rx="3.2" ry="7" fill="none" stroke="#444" stroke-width="1"/><path d="M1.3 5.7H14.7M1.3 10.3H9" stroke="#444" stroke-width="1"/><rect x="7.5" y="9.6" width="10.5" height="7.4" fill="#fff"/><path d="M4.2 12.3H16.2M13.6 9.8L16.2 12.3L13.6 14.8" fill="none" stroke="#2f75c0" stroke-width="1.2"/></svg>
<svg class="b" style="left:949px;top:569px;" width="12" height="15" viewBox="0 0 12 15"><path d="M0.6 0.6H6.5L10.5 4.6V14.4H0.6Z M6.5 0.6V4.6H10.5" fill="#fff" stroke="#3a3a3a" stroke-width="1.1" stroke-linejoin="round"/><path d="M3.4 11.5L2.8 4.5L7.5 8 M3 8.6L6 7" fill="none" stroke="#e48aa0" stroke-width="1"/></svg>
<svg class="b" style="left:949px;top:597px;" width="16" height="16" viewBox="0 0 16 16"><path d="M0.6 0.6H6.5L10.5 4.6V14.4H0.6Z M6.5 0.6V4.6H10.5" fill="#fff" stroke="#3a3a3a" stroke-width="1.1" stroke-linejoin="round"/><path d="M3.4 11.5L2.8 4.5L7.5 8 M3 8.6L6 7" fill="none" stroke="#e48aa0" stroke-width="1"/><rect x="7" y="8" width="9" height="8" fill="#fff"/><path d="M8.5 9.5L14 15M14 9.5L8.5 15" stroke="#dc4a5e" stroke-width="1.1"/></svg>
<svg class="b" style="left:949px;top:624px;" width="16" height="16" viewBox="0 0 16 16"><g opacity="0.45"><path d="M0.6 0.6H6.5L10.5 4.6V14.4H0.6Z M6.5 0.6V4.6H10.5" fill="#fff" stroke="#3a3a3a" stroke-width="1.1" stroke-linejoin="round"/><rect x="5.5" y="7.5" width="9" height="8" fill="#fff" stroke="#3a3a3a"/><rect x="7.5" y="7.5" width="5" height="3" fill="none" stroke="#3a3a3a" stroke-width="0.9"/><rect x="7.5" y="12.5" width="5" height="3" fill="none" stroke="#3a3a3a" stroke-width="0.9"/></g></svg>
</div></body></html>
